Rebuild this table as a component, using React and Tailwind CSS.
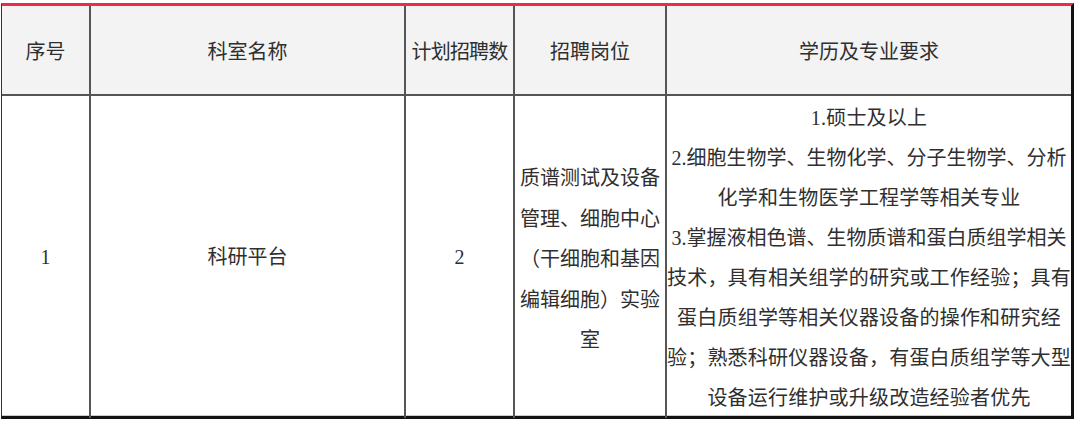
export default function App() {
  const font = { fontFamily: '"Liberation Serif", "Noto Sans CJK SC", serif' }
  const head = "flex items-center justify-center pt-[3px] text-[20px] text-[#2f2f2f] border-r-2 border-[#555]"
  const cell = "flex items-center justify-center text-[20px] text-[#2f2f2f] border-r-2 border-[#555] text-center"

  return (
    <div className="w-[1080px] h-[428px] bg-white pt-[3px]" style={font}>
      <div className="ml-[1px] w-[1073px] border-t-[3px] border-t-[#ee2a47] border-l border-l-[#333] border-r-[3px] border-r-[#111] border-b-[3px] border-b-[#111]">
        <div className="grid grid-cols-[89px_315px_109px_152px_404px] h-[90px] bg-[#f3f3f3] border-b-2 border-[#555]">
          <div className={head}>序号</div>
          <div className={head}>科室名称</div>
          <div className={head + " tracking-[-0.8px]"}>计划招聘数</div>
          <div className={head}>招聘岗位</div>
          <div className="flex items-center justify-center pt-[3px] text-[20px] text-[#2f2f2f]">学历及专业要求</div>
        </div>
        <div className="grid grid-cols-[89px_315px_109px_152px_404px] h-[320px] border-b border-[#ccc]">
          <div className={cell}>1</div>
          <div className={cell}>科研平台</div>
          <div className={cell}>2</div>
          <div className={cell + " px-[3px] pt-[5px] leading-[40.5px]"}>
            <p>质谱测试及设备管理、细胞中心（干细胞和基因编辑细胞）实验室</p>
          </div>
          <div className="flex flex-col justify-center pt-[2px] text-center text-[20px] leading-[40px] text-[#2f2f2f] tracking-[0.2px]">
            <p>1.硕士及以上</p>
            <p className="tracking-[0px]">2.细胞生物学、生物化学、分子生物学、分析</p>
            <p>化学和生物医学工程学等相关专业</p>
            <p className="tracking-[0px]">3.掌握液相色谱、生物质谱和蛋白质组学相关</p>
            <p>技术，具有相关组学的研究或工作经验；具有</p>
            <p>蛋白质组学等相关仪器设备的操作和研究经</p>
            <p>验；熟悉科研仪器设备，有蛋白质组学等大型</p>
            <p>设备运行维护或升级改造经验者优先</p>
          </div>
        </div>
      </div>
    </div>
  )
}
